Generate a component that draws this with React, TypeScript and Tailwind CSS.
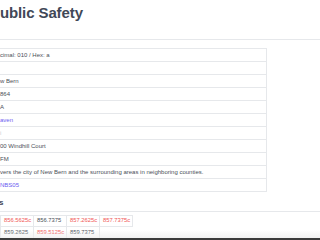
import React from 'react';

const rows: { text: string; tone?: 'link' | 'muted' }[] = [
  { text: 'cimal: 010 / Hex: a' },
  { text: '' },
  { text: 'w Bern' },
  { text: '864' },
  { text: 'A' },
  { text: 'aven', tone: 'link' },
  { text: 'i', tone: 'muted' },
  { text: '00 Windhill Court' },
  { text: 'FM' },
  { text: 'vers the city of New Bern and the surrounding areas in neighboring counties.' },
  { text: 'NBS05', tone: 'link' },
];

const freqs: { value: string; alert?: boolean }[][] = [
  [
    { value: '856.5625c', alert: true },
    { value: '856.7375' },
    { value: '857.2625c', alert: true },
    { value: '857.7375c', alert: true },
  ],
  [
    { value: '859.2625' },
    { value: '859.5125c', alert: true },
    { value: '859.7375' },
  ],
];

const App: React.FC = () => {
  return (
    <div
      className="relative w-[320px] h-[240px] overflow-hidden bg-white"
      style={{ fontFamily: '"Liberation Sans", Arial, sans-serif' }}
    >
      <header className="h-[40px] flex items-center border-b border-[#e6e8eb]">
        <h1 className="-ml-[10px] -mt-[12px] text-[15px] font-bold text-[#414857] tracking-[-0.1px]">
          Public Safety
        </h1>
      </header>

      <section className="pt-[8px]">
        <div className="w-[267px] border-t border-r border-[#e6e8eb]">
          {rows.map((r, i) => (
            <div
              key={i}
              className="h-[13px] flex items-center border-b border-[#e6e8eb] text-[6px] leading-none"
            >
              <span
                className={
                  r.tone === 'link'
                    ? 'text-[#6a5cf0]'
                    : r.tone === 'muted'
                    ? 'text-[#c9ccd2]'
                    : 'text-[#4a4f58]'
                }
              >
                {r.text}
              </span>
            </div>
          ))}
        </div>
      </section>

      <div className="h-[20px] flex items-center border-b border-[#e6e8eb]">
        <h2 className="-ml-[1px] mt-[2px] text-[8px] font-bold text-[#3f4654]">s</h2>
      </div>

      <div className="pt-[3px] -ml-[1px]">
        {freqs.map((row, i) => (
          <div key={i} className="flex">
            <div className="w-[2px] h-[12px] border-r border-b border-[#e6e8eb]" />
            {row.map((f, j) => (
              <div
                key={j}
                className={`w-[33px] h-[12px] flex items-center pl-[3px] border-r border-b border-[#e6e8eb] text-[5.8px] leading-none ${
                  i === 0 ? 'border-t' : ''
                } ${f.alert ? 'text-[#f05555]' : 'text-[#4a4f58]'}`}
              >
                {f.value}
              </div>
            ))}
          </div>
        ))}
      </div>

      <div className="absolute left-0 right-0 bottom-0 flex flex-col pointer-events-none">
        <div className="h-[8px] bg-gradient-to-b from-transparent to-[#ececec]/70" />
        <div className="h-[2px] bg-[#3b3b3b]" />
      </div>
    </div>
  );
};

export default App;
